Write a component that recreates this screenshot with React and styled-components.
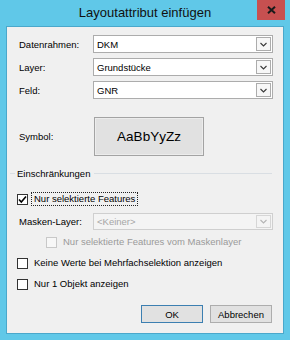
import React from 'react';
import styled, { createGlobalStyle } from 'styled-components';

const Global = createGlobalStyle`
  html, body { margin: 0; padding: 0; background: #ffffff; }
  body { font-family: "Liberation Sans", Arial, sans-serif; }
  * { box-sizing: border-box; }
`;

const Window = styled.div`
  width: 290px;
  height: 340px;
  background: #60c8e8;
  display: flex;
  flex-direction: column;
  padding: 0 6px 6px;
`;

const TitleBar = styled.div`
  height: 26px;
  margin: 0 -6px;
  display: grid;
  grid-template-columns: 1fr auto 1fr;
  align-items: start;
`;

const Title = styled.div`
  grid-column: 2;
  line-height: 26px;
  font-size: 13px;
  color: #111;
  white-space: nowrap;
`;

const CloseButton = styled.div`
  grid-column: 3;
  justify-self: end;
  margin-right: 5px;
  width: 28px;
  height: 20px;
  background: #c75050;
  display: flex;
  align-items: center;
  justify-content: center;
`;

const Client = styled.div`
  flex: 1;
  border: 1px solid #4aa8cb;
  background: #f0f0f0;
  display: flex;
  flex-direction: column;
  padding: 0 10px;
  font-size: 9.5px;
  color: #000;
`;

const Fields = styled.div`
  margin-top: 8px;
  display: flex;
  flex-direction: column;
  gap: 5px;
`;

const FieldRow = styled.div`
  display: grid;
  grid-template-columns: 76px 1fr;
  align-items: center;
  height: ${p => p.$h || 18}px;
  margin-top: ${p => p.$mt || 0}px;
`;

const Label = styled.div`
  padding-left: 2px;
  white-space: nowrap;
`;

const ComboBox = styled.div`
  height: 100%;
  display: flex;
  align-items: center;
  border: 1px solid ${p => (p.$disabled ? '#cfcfcf' : '#acacac')};
  background: ${p => (p.$disabled ? '#f4f4f4' : '#ffffff')};
  padding: 0 1px 0 3px;
`;

const ComboValue = styled.div`
  flex: 1;
  color: ${p => (p.$disabled ? '#a6a6a6' : '#000')};
  white-space: nowrap;
`;

const DropButton = styled.div`
  width: 15px;
  height: ${p => (p.$disabled ? 13 : 14)}px;
  border: 1px solid ${p => (p.$disabled ? '#d6d6d6' : '#acacac')};
  background: ${p => (p.$disabled ? '#f4f4f4' : '#f7f7f7')};
  display: flex;
  align-items: center;
  justify-content: center;
`;

const SymbolButton = styled.div`
  margin-left: 1px;
  width: 110px;
  height: 39px;
  border: 1px solid #a3a3a3;
  box-shadow: inset 0 0 0 1px #ececec;
  background: #e1e1e1;
  display: flex;
  align-items: center;
  justify-content: center;
  font-size: 13.5px;
  color: #000;
`;

const GroupHeader = styled.div`
  margin: 11px 1px 0 -7px;
  height: 13px;
  display: flex;
  align-items: center;
  gap: 2px;
`;

const GroupLine = styled.div`
  height: 1px;
  background: #d9dee3;
  flex: ${p => (p.$grow ? 1 : '0 0 5px')};
  margin-left: ${p => (p.$grow ? 2 : 0)}px;
`;

const GroupTitle = styled.div`
  white-space: nowrap;
`;

const CheckList = styled.div`
  display: flex;
  flex-direction: column;
  gap: 7px;
  margin-top: ${p => p.$mt || 0}px;
`;

const CheckRow = styled.div`
  display: flex;
  align-items: center;
  height: 14px;
  margin-left: ${p => p.$indent || 0}px;
  margin-top: ${p => p.$mt || 0}px;
`;

const Box = styled.div`
  width: 11px;
  height: 11px;
  border: 1px solid ${p => (p.$disabled ? '#c8c8c8' : '#333333')};
  background: ${p => (p.$disabled ? '#f7f7f7' : '#ffffff')};
  margin-right: 3px;
  display: flex;
  align-items: center;
  justify-content: center;
`;

const CheckText = styled.div`
  border: 1px dotted ${p => (p.$focused ? '#222' : 'transparent')};
  padding: 0 2px;
  line-height: 12px;
  white-space: nowrap;
  color: ${p => (p.$disabled ? '#9a9a9a' : '#000')};
`;

const ButtonRow = styled.div`
  margin-top: 14px;
  margin-right: 1px;
  display: flex;
  justify-content: flex-end;
  gap: 7px;
`;

const Button = styled.div`
  width: 62px;
  height: 18px;
  border: 1px solid ${p => (p.$default ? '#3c7fb1' : '#adadad')};
  background: #e1e1e1;
  display: flex;
  align-items: center;
  justify-content: center;
  color: #000;
`;

const Chevron = ({ disabled }) => (
  <svg width="7" height="5" viewBox="0 0 7 5">
    <polyline points="0.5,1 3.5,4 6.5,1" fill="none" stroke={disabled ? '#b4b4b4' : '#3a3a3a'} strokeWidth="1.1" />
  </svg>
);

const Combo = ({ value, disabled }) => (
  <ComboBox $disabled={disabled}>
    <ComboValue $disabled={disabled}>{value}</ComboValue>
    <DropButton $disabled={disabled}>
      <Chevron disabled={disabled} />
    </DropButton>
  </ComboBox>
);

const Check = ({ checked, disabled, focused, indent, mt, children }) => (
  <CheckRow $indent={indent} $mt={mt}>
    <Box $disabled={disabled}>
      {checked && (
        <svg width="9" height="9" viewBox="0 0 9 9">
          <polyline points="1,4.5 3.3,7 8,1.5" fill="none" stroke="#000" strokeWidth="1.6" />
        </svg>
      )}
    </Box>
    <CheckText $focused={focused} $disabled={disabled}>{children}</CheckText>
  </CheckRow>
);

export default function App() {
  return (
    <>
      <Global />
      <Window>
        <TitleBar>
          <Title>Layoutattribut einfügen</Title>
          <CloseButton>
            <svg width="9" height="8" viewBox="0 0 9 8">
              <path d="M1 0.8 L8 7.2 M8 0.8 L1 7.2" stroke="#1a1a1a" strokeWidth="2" />
            </svg>
          </CloseButton>
        </TitleBar>
        <Client>
          <Fields>
            <FieldRow>
              <Label>Datenrahmen:</Label>
              <Combo value="DKM" />
            </FieldRow>
            <FieldRow>
              <Label>Layer:</Label>
              <Combo value="Grundstücke" />
            </FieldRow>
            <FieldRow>
              <Label>Feld:</Label>
              <Combo value="GNR" />
            </FieldRow>
          </Fields>
          <FieldRow $h={39} $mt={18}>
            <Label>Symbol:</Label>
            <SymbolButton>AaBbYyZz</SymbolButton>
          </FieldRow>
          <GroupHeader>
            <GroupLine />
            <GroupTitle>Einschränkungen</GroupTitle>
            <GroupLine $grow />
          </GroupHeader>
          <Check checked focused mt={12}>Nur selektierte Features</Check>
          <FieldRow $h={17} $mt={7}>
            <Label>Masken-Layer:</Label>
            <Combo value="<Keiner>" disabled />
          </FieldRow>
          <CheckList $mt={5}>
            <Check disabled indent={29}>Nur selektierte Features vom Maskenlayer</Check>
            <Check>Keine Werte bei Mehrfachselektion anzeigen</Check>
            <Check>Nur 1 Objekt anzeigen</Check>
          </CheckList>
          <ButtonRow>
            <Button $default>OK</Button>
            <Button>Abbrechen</Button>
          </ButtonRow>
        </Client>
      </Window>
    </>
  );
}
